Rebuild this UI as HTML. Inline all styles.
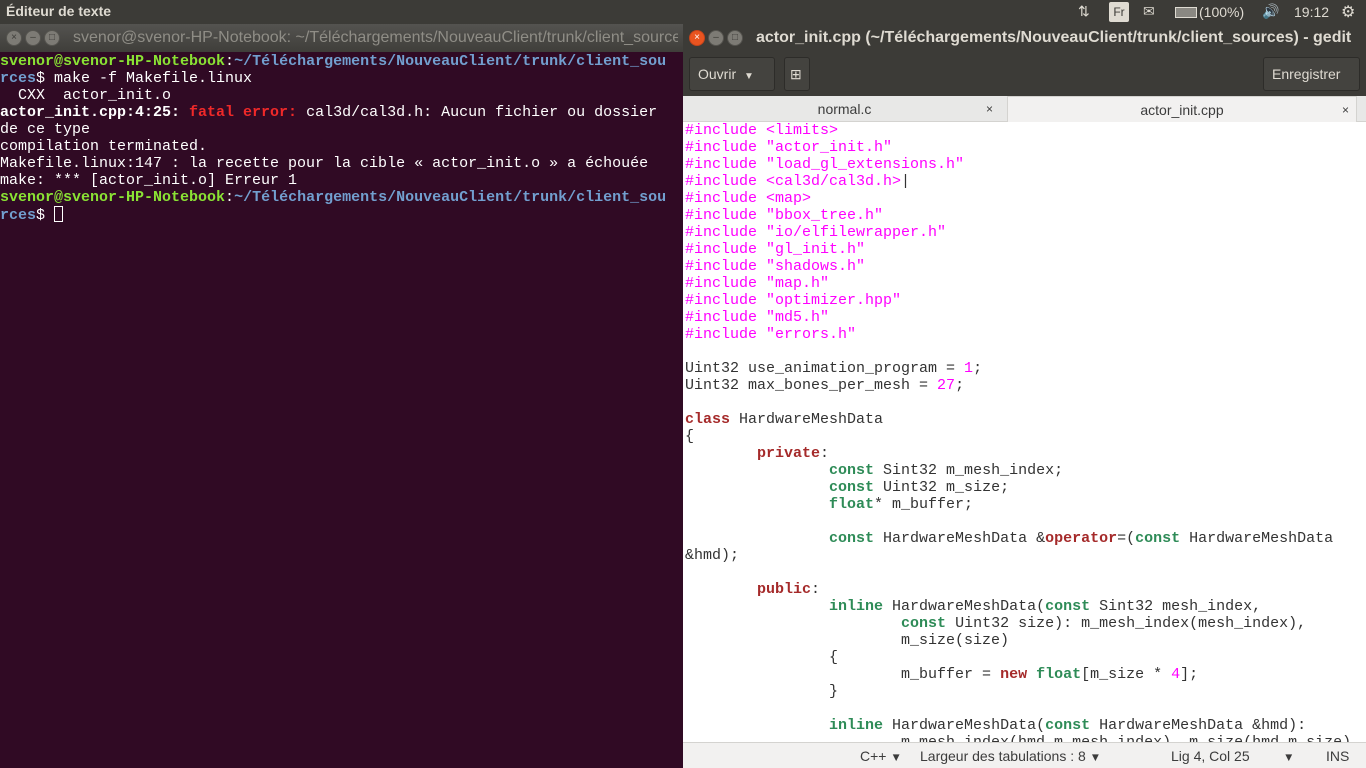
<!DOCTYPE html>
<html><head><meta charset="utf-8"><style>
*{margin:0;padding:0;box-sizing:border-box}
body{width:1366px;height:768px;overflow:hidden;background:#300a24;font-family:"Liberation Sans",sans-serif;position:relative}
.panel{position:absolute;left:0;top:0;width:1366px;height:24px;background:#3c3b37;color:#dfdbd2;font-size:14px}
.panel .t{position:absolute;left:6px;top:3px;font-weight:bold}
.tb{position:absolute;top:24px;height:28px;background:linear-gradient(#545350,#3f3e3a);}
.btns{position:absolute;left:6px;top:6px}
.btns span{display:inline-block;width:16px;height:16px;border-radius:50%;margin-right:3px;background:#7d7b75;border:1px solid #55544f;color:#3c3b37;font-size:10px;line-height:14px;text-align:center;vertical-align:top}
.mono{font-family:"Liberation Mono",monospace;font-size:15px;line-height:17px;white-space:pre}
.term{position:absolute;left:0;top:52px;width:681px;height:716px;background:#300a24;color:#fff;padding-top:1px}
.g{color:#8ae234;font-weight:bold}.b{color:#729fcf;font-weight:bold}.w{font-weight:bold}.r{color:#ef2929;font-weight:bold}
.gedit{position:absolute;left:683px;top:24px;width:683px;height:744px;background:#fff}
.toolbar{position:absolute;left:0;top:28px;width:683px;height:44px;background:#3c3b37}
.btn{position:absolute;top:5px;height:34px;border:1px solid #2d2c29;border-radius:3px;background:#44433f;color:#dfdbd2;font-size:14px;line-height:32px;padding:0 8px}
.tabs{position:absolute;left:0;top:72px;width:683px;height:26px;background:#e8e8e7;border-bottom:1px solid #d4d3d0}
.tab{position:absolute;top:0;height:26px;font-size:14px;color:#3c3c3c;line-height:26px;text-align:center}
.code{position:absolute;left:2px;top:98px;color:#333}
.p{color:#ff00ff}.k{color:#a52a2a;font-weight:bold}.ty{color:#2e8b57;font-weight:bold}
.status{position:absolute;left:0;top:718px;width:683px;height:26px;background:#f2f1f0;border-top:1px solid #d4d3d0;font-size:14px;color:#3c3c3c}
.status span{position:absolute;top:5px}
</style></head><body>
<div class="panel"><span class="t">Éditeur de texte</span>
<span style="position:absolute;left:1078px;top:3px">⇅</span>
<span style="position:absolute;left:1109px;top:2px;width:20px;height:20px;background:#dfdbd2;color:#3c3b37;font-size:12px;text-align:center;line-height:20px;border-radius:2px">Fr</span>
<span style="position:absolute;left:1143px;top:3px">✉</span>
<span style="position:absolute;left:1175px;top:7px;width:22px;height:11px;border:1px solid #dfdbd2;background:#8a8882"></span>
<span style="position:absolute;left:1199px;top:4px">(100%)</span>
<span style="position:absolute;left:1262px;top:3px">🔊</span>
<span style="position:absolute;left:1294px;top:4px">19:12</span>
<span style="position:absolute;left:1341px;top:2px;font-size:16px">⚙</span>
</div>
<div class="tb" style="left:0;width:683px"><div class="btns"><span>×</span><span>–</span><span>□</span></div>
<span style="position:absolute;left:73px;top:5px;color:#8f8d86;font-size:16px;white-space:nowrap;overflow:hidden;width:605px">svenor@svenor-HP-Notebook: ~/Téléchargements/NouveauClient/trunk/client_sources</span></div>
<div class="term mono"><span class="g">svenor@svenor-HP-Notebook</span>:<span class="b">~/Téléchargements/NouveauClient/trunk/client_sou
rces</span>$ make -f Makefile.linux
  CXX  actor_init.o
<span class="w">actor_init.cpp:4:25: </span><span class="r">fatal error: </span>cal3d/cal3d.h: Aucun fichier ou dossier
de ce type
compilation terminated.
Makefile.linux:147 : la recette pour la cible « actor_init.o » a échouée
make: *** [actor_init.o] Erreur 1
<span class="g">svenor@svenor-HP-Notebook</span>:<span class="b">~/Téléchargements/NouveauClient/trunk/client_sou
rces</span>$ <span style="display:inline-block;width:9px;height:16px;border:1px solid #fff;vertical-align:-3px"></span></div>
<div class="gedit">
<div class="tb" style="top:0;left:0;width:683px;background:#3c3b37"><div class="btns"><span style="background:#e95420;border-color:#c7441a;color:#fff">×</span><span>–</span><span>□</span></div>
<span style="position:absolute;left:73px;top:5px;color:#dfdbd2;font-size:16px;font-weight:bold;white-space:nowrap">actor_init.cpp (~/Téléchargements/NouveauClient/trunk/client_sources) - gedit</span></div>
<div class="toolbar">
<div class="btn" style="left:6px;width:86px">Ouvrir <span style="font-size:10px;margin-left:4px">▼</span></div>
<div class="btn" style="left:101px;width:26px;padding:0 5px">⊞</div>
<div class="btn" style="left:580px;width:97px">Enregistrer</div>
</div>
<div class="tabs">
<div class="tab" style="left:0;width:323px">normal.c<span style="position:absolute;left:303px;font-size:12px">×</span></div>
<div class="tab" style="left:324px;width:350px;background:#f2f1f0;border:1px solid #d4d3d0;border-bottom:none">actor_init.cpp<span style="position:absolute;left:334px;font-size:12px">×</span></div>
</div>
<div class="code mono"><span class="p">#include &lt;limits&gt;
#include "actor_init.h"
#include "load_gl_extensions.h"
#include &lt;cal3d/cal3d.h&gt;</span>|<span class="p">
#include &lt;map&gt;
#include "bbox_tree.h"
#include "io/elfilewrapper.h"
#include "gl_init.h"
#include "shadows.h"
#include "map.h"
#include "optimizer.hpp"
#include "md5.h"
#include "errors.h"</span>

Uint32 use_animation_program = <span class="p">1</span>;
Uint32 max_bones_per_mesh = <span class="p">27</span>;

<span class="k">class</span> HardwareMeshData
{
        <span class="k">private</span>:
                <span class="ty">const</span> Sint32 m_mesh_index;
                <span class="ty">const</span> Uint32 m_size;
                <span class="ty">float</span>* m_buffer;

                <span class="ty">const</span> HardwareMeshData &amp;<span class="k">operator</span>=(<span class="ty">const</span> HardwareMeshData
&amp;hmd);

        <span class="k">public</span>:
                <span class="ty">inline</span> HardwareMeshData(<span class="ty">const</span> Sint32 mesh_index,
                        <span class="ty">const</span> Uint32 size): m_mesh_index(mesh_index),
                        m_size(size)
                {
                        m_buffer = <span class="k">new</span> <span class="ty">float</span>[m_size * <span class="p">4</span>];
                }

                <span class="ty">inline</span> HardwareMeshData(<span class="ty">const</span> HardwareMeshData &amp;hmd):
                        m_mesh_index(hmd.m_mesh_index), m_size(hmd.m_size)</div>
<div class="status">
<span style="left:177px">C++ <small>▼</small></span>
<span style="left:237px">Largeur des tabulations : 8 <small>▼</small></span>
<span style="left:488px">Lig 4, Col 25</span>
<span style="left:600px"><small>▼</small></span>
<span style="left:643px">INS</span>
</div>
</div>
</body></html>
